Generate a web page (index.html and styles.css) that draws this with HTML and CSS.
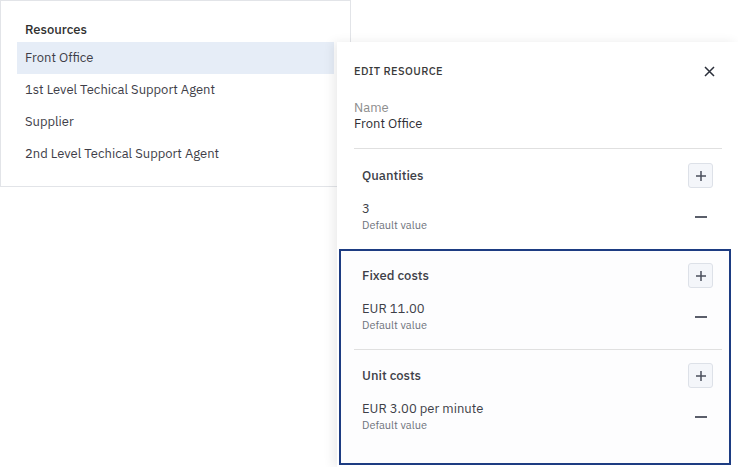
FILE: index.html
```html
<!DOCTYPE html>
<html>
<head>
<meta charset="utf-8">
<link rel="stylesheet" href="styles.css">
</head>
<body>
<div class="page">
  <div class="list-panel">
    <div class="list-title">Resources</div>
    <ul class="list">
      <li class="item selected">Front Office</li>
      <li class="item">1st Level Techical Support Agent</li>
      <li class="item">Supplier</li>
      <li class="item">2nd Level Techical Support Agent</li>
    </ul>
  </div>

  <aside class="edit-panel">
    <div class="edit-header">
      <span class="edit-title">EDIT RESOURCE</span>
      <svg class="close" width="11" height="11" viewBox="0 0 11 11"><path d="M1 1 L10 10 M10 1 L1 10" stroke="#2b2f3a" stroke-width="1.5" fill="none"/></svg>
    </div>
    <div class="name-block">
      <div class="name-label">Name</div>
      <div class="name-value">Front Office</div>
    </div>

    <div class="section">
      <div class="section-head">
        <span class="section-title">Quantities</span>
        <button class="add-btn"><svg width="12" height="12" viewBox="0 0 12 12"><path d="M6 1 V11 M1 6 H11" stroke="#4a4f5c" stroke-width="1.5" fill="none"/></svg></button>
      </div>
      <div class="value-row">
        <div class="value-text">
          <div class="value">3</div>
          <div class="sub">Default value</div>
        </div>
        <span class="remove"><span class="minus"></span></span>
      </div>
    </div>

    <div class="highlight">
      <div class="section">
        <div class="section-head">
          <span class="section-title">Fixed costs</span>
          <button class="add-btn"><svg width="12" height="12" viewBox="0 0 12 12"><path d="M6 1 V11 M1 6 H11" stroke="#4a4f5c" stroke-width="1.5" fill="none"/></svg></button>
        </div>
        <div class="value-row">
          <div class="value-text">
            <div class="value">EUR 11.00</div>
            <div class="sub">Default value</div>
          </div>
          <span class="remove"><span class="minus"></span></span>
        </div>
      </div>
      <div class="section">
        <div class="section-head">
          <span class="section-title">Unit costs</span>
          <button class="add-btn"><svg width="12" height="12" viewBox="0 0 12 12"><path d="M6 1 V11 M1 6 H11" stroke="#4a4f5c" stroke-width="1.5" fill="none"/></svg></button>
        </div>
        <div class="value-row">
          <div class="value-text">
            <div class="value">EUR 3.00 per minute</div>
            <div class="sub">Default value</div>
          </div>
          <span class="remove"><span class="minus"></span></span>
        </div>
      </div>
    </div>
  </aside>
</div>
</body>
</html>
```
FILE: styles.css
```css
* { box-sizing: border-box; }
html, body {
  margin: 0;
  padding: 0;
  background: #ffffff;
  font-family: "IBM Plex Sans", "Noto Sans", "Open Sans", sans-serif;
  color: #393939;
}
.page {
  position: relative;
  width: 738px;
  height: 467px;
  overflow: hidden;
}
.list-panel {
  width: 351px;
  height: 187px;
  border: 1px solid #e2e4e8;
  padding: 19px 16px 16px 16px;
}
.list-title {
  height: 22px;
  padding-left: 8px;
  font-size: 13px;
  font-weight: 500;
  line-height: 20px;
  color: #303030;
}
.list {
  list-style: none;
  margin: 0;
  padding: 0;
}
.item {
  height: 32px;
  line-height: 31px;
  padding-left: 8px;
  font-size: 13px;
  color: #3e3e48;
}
.item.selected {
  background: #e6edf7;
}
.edit-panel {
  position: absolute;
  left: 337px;
  top: 42px;
  right: 0;
  bottom: 0;
  background: #ffffff;
  box-shadow: -4px 0 10px rgba(0, 0, 0, 0.08);
  padding: 20px 16px 0 17px;
}
.edit-header {
  display: flex;
  justify-content: space-between;
  align-items: center;
  height: 18px;
  padding-right: 7px;
}
.edit-title {
  font-size: 11px;
  font-weight: 500;
  letter-spacing: 0.4px;
  color: #393939;
}
.name-block {
  padding-top: 20px;
  padding-bottom: 16px;
  border-bottom: 1px solid #e0e0e0;
}
.name-label {
  font-size: 13px;
  line-height: 16px;
  color: #8d8d8d;
}
.name-value {
  font-size: 13px;
  line-height: 16px;
  color: #2f2f35;
}
.section {
  padding: 14px 9px 16px 8px;
}
.section-head {
  display: flex;
  justify-content: space-between;
  align-items: center;
  height: 25px;
}
.section-title {
  font-size: 13px;
  font-weight: 500;
  color: #3d3f48;
}
.add-btn {
  width: 25px;
  height: 25px;
  padding: 0;
  border: 1px solid #dde1e8;
  border-radius: 3px;
  background: #f4f6fa;
  display: flex;
  align-items: center;
  justify-content: center;
}
.value-row {
  margin-top: 13px;
  display: flex;
  justify-content: space-between;
  align-items: center;
}
.value {
  font-size: 13px;
  line-height: 16px;
  color: #3d3f48;
}
.sub {
  margin-top: 0;
  font-size: 11px;
  line-height: 16px;
  color: #6f737c;
}
.remove {
  width: 25px;
  display: flex;
  justify-content: center;
}
.minus {
  display: block;
  width: 12px;
  height: 2px;
  background: #5a5e6a;
}
.highlight {
  margin: 0 -9px 0 -15px;
  border: 2px solid #1d3c82;
  padding: 0 7px 14px 13px;
  background: #fdfdfe;
}
.highlight .section:first-child {
  padding-top: 12px;
}
.highlight .section + .section {
  border-top: 1px solid #e0e0e0;
  padding-top: 13px;
}
```
